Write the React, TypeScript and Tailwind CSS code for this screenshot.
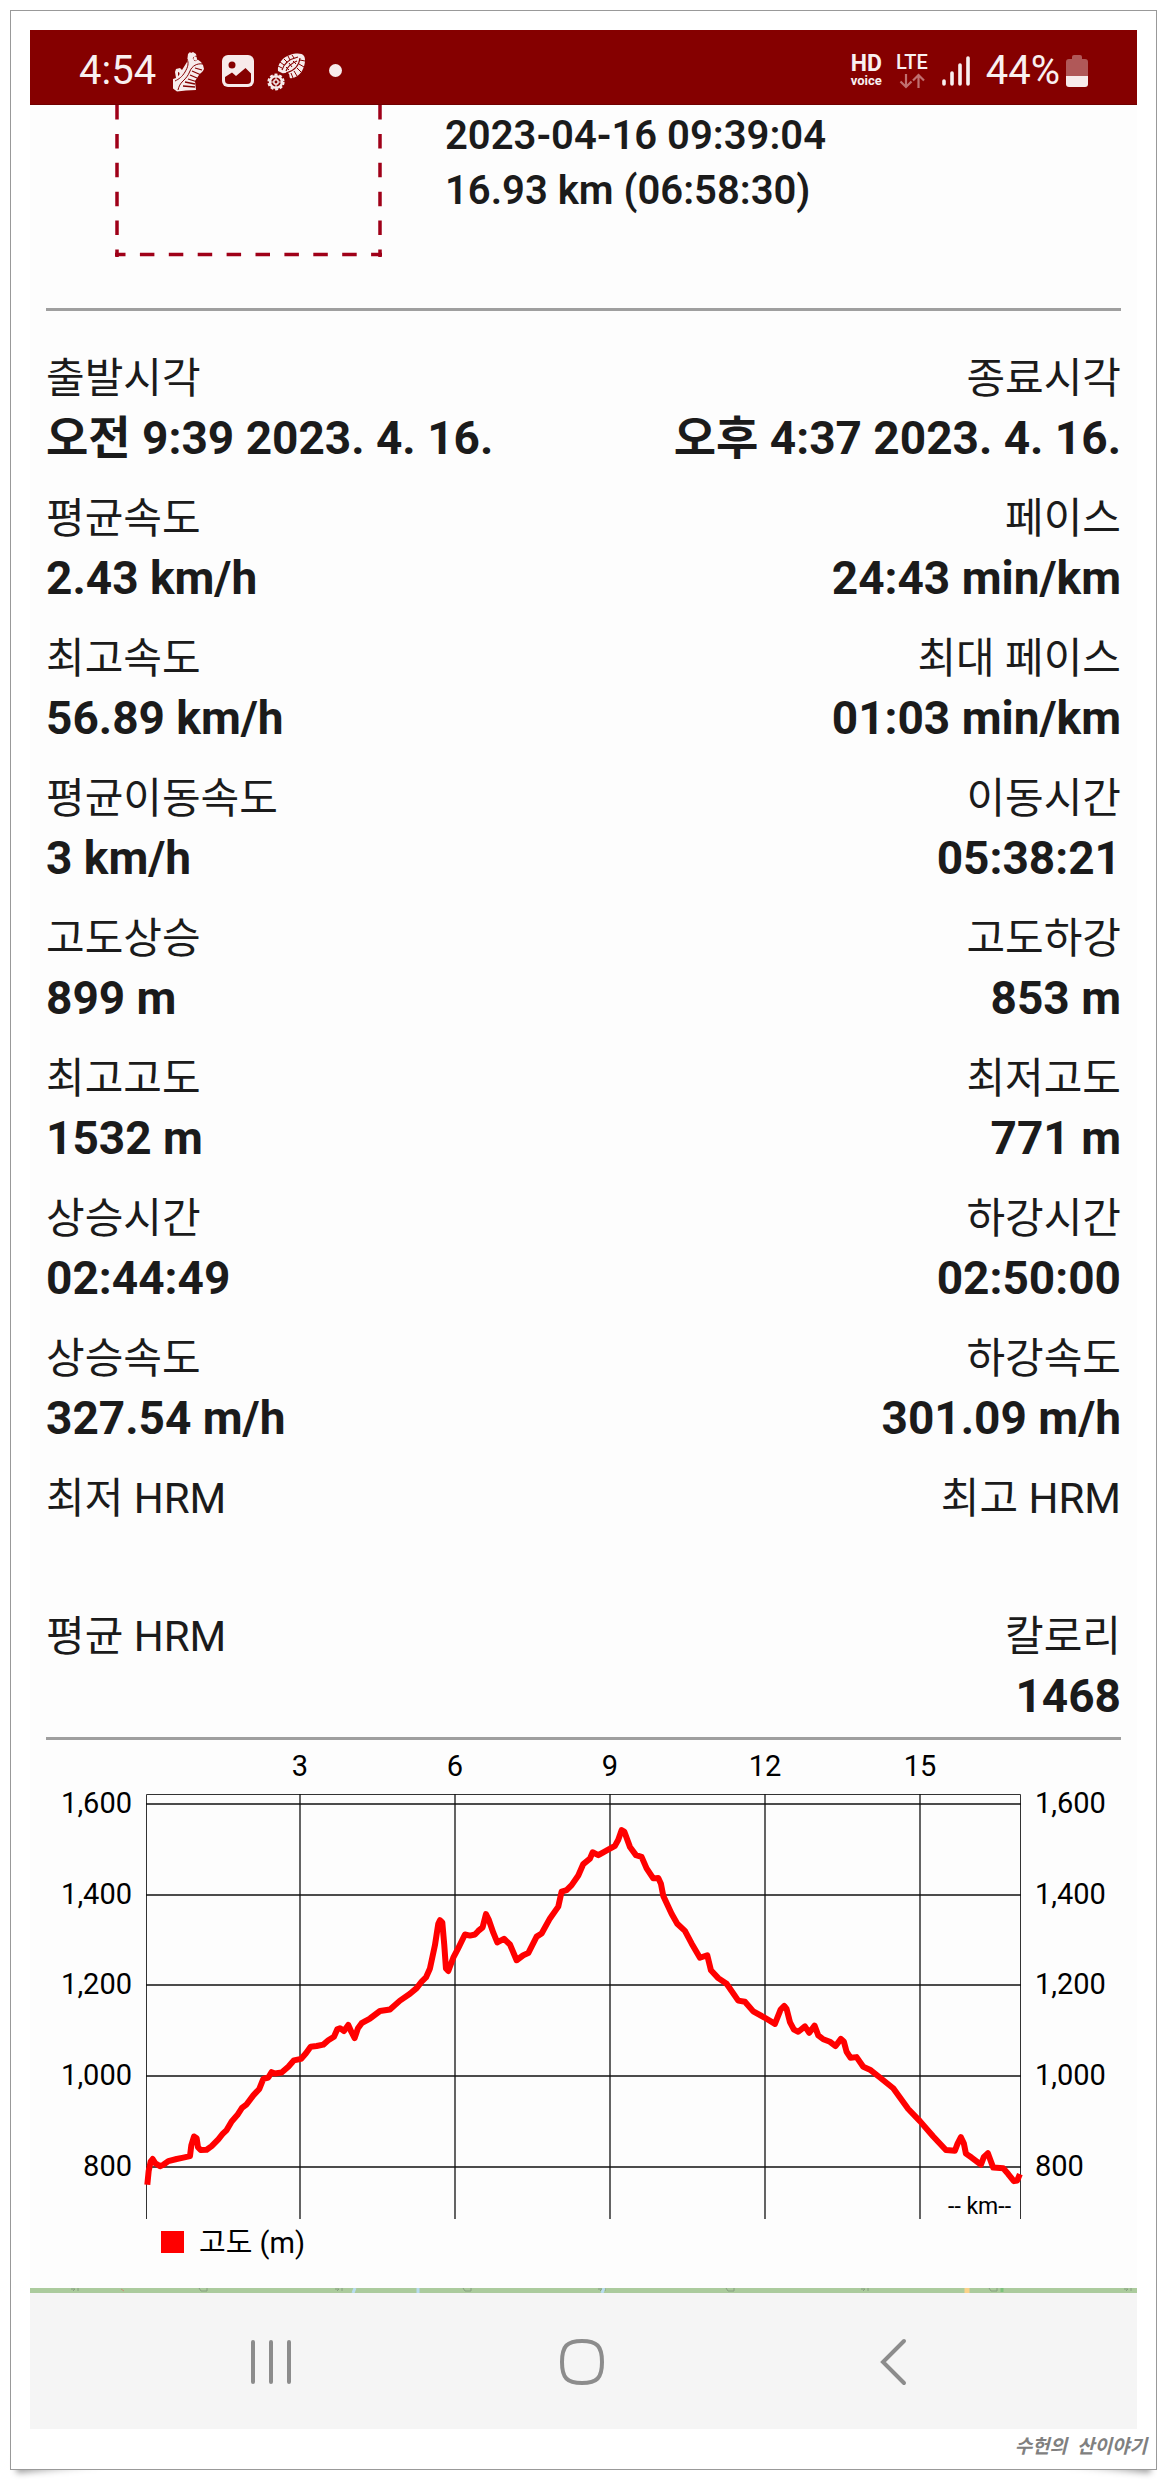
import type { ReactNode } from "react";

type Stat = { label: string; value: string };

const ROWS: [Stat, Stat][] = [
  [{ label: "출발시각", value: "오전 9:39 2023. 4. 16." }, { label: "종료시각", value: "오후 4:37 2023. 4. 16." }],
  [{ label: "평균속도", value: "2.43 km/h" }, { label: "페이스", value: "24:43 min/km" }],
  [{ label: "최고속도", value: "56.89 km/h" }, { label: "최대 페이스", value: "01:03 min/km" }],
  [{ label: "평균이동속도", value: "3 km/h" }, { label: "이동시간", value: "05:38:21" }],
  [{ label: "고도상승", value: "899 m" }, { label: "고도하강", value: "853 m" }],
  [{ label: "최고고도", value: "1532 m" }, { label: "최저고도", value: "771 m" }],
  [{ label: "상승시간", value: "02:44:49" }, { label: "하강시간", value: "02:50:00" }],
  [{ label: "상승속도", value: "327.54 m/h" }, { label: "하강속도", value: "301.09 m/h" }],
  [{ label: "최저 HRM", value: "" }, { label: "최고 HRM", value: "" }],
  [{ label: "평균 HRM", value: "" }, { label: "칼로리", value: "1468" }],
];

// Elevation trace in its own fine-grained units; the chart scales it onto the plot.
const TRACE =
  "442,1300 446,1262 452,1235 458,1228 466,1240 480,1248 490,1244 505,1234 530,1228 550,1224 570,1220 574,1190 582,1165 590,1170 594,1195 602,1203 620,1202 635,1192 655,1173 668,1158 680,1147 695,1123 712,1105 726,1085 740,1075 760,1050 778,1032 790,1004 805,1000 815,985 825,989 845,986 865,970 882,952 903,948 918,932 932,914 950,912 970,908 985,896 1002,886 1012,865 1020,862 1032,870 1045,853 1054,872 1064,890 1074,862 1085,848 1110,835 1140,814 1170,810 1200,785 1230,766 1250,750 1265,732 1278,720 1290,695 1305,630 1315,570 1320,560 1327,566 1333,630 1338,695 1345,702 1360,665 1375,638 1395,600 1410,603 1425,600 1435,590 1448,580 1458,543 1467,560 1480,595 1492,622 1512,612 1530,628 1550,672 1570,658 1585,652 1610,606 1625,597 1650,555 1675,522 1685,480 1700,476 1715,462 1735,435 1750,403 1770,388 1778,370 1795,378 1810,370 1830,360 1845,352 1855,335 1865,308 1873,312 1890,355 1908,378 1925,383 1940,415 1960,443 1975,442 1983,458 1990,492 2015,542 2032,570 2055,590 2075,625 2100,665 2122,658 2133,700 2155,722 2180,738 2215,785 2235,788 2260,815 2295,833 2325,850 2342,810 2353,800 2360,808 2370,845 2382,866 2395,872 2415,857 2428,875 2444,855 2455,882 2470,893 2490,900 2507,912 2523,892 2532,900 2540,928 2552,945 2570,943 2590,970 2610,978 2640,1000 2680,1030 2725,1088 2760,1122 2800,1165 2838,1203 2865,1205 2873,1185 2883,1167 2892,1185 2898,1213 2915,1224 2943,1244 2952,1222 2964,1212 2972,1232 2980,1252 3010,1254 3025,1270 3042,1290 3052,1288 3060,1270";

const DISTANCE_TICKS = [
  { label: "3", x: 254 },
  { label: "6", x: 409 },
  { label: "9", x: 564 },
  { label: "12", x: 719 },
  { label: "15", x: 874 },
];

const ALTITUDE_TICKS = [
  { label: "1,600", y: 64 },
  { label: "1,400", y: 155 },
  { label: "1,200", y: 245 },
  { label: "1,000", y: 336 },
  { label: "800", y: 427 },
];

function ShoeIcon() {
  return (
    <svg className="h-[42px] w-[34px]" viewBox="0 0 34 42" aria-hidden="true">
      <path
        fill="#f7ebeb"
        d="M16 4l2-2 1 1 2-1 3 2 1 5 4 3 2 3 1 4c-1 3-4 4-5 6l-4 6 1 9-10 .5-9 1-4-3V29l3-1-1-6 1-3 4-1 2 2 5-8z"
      />
      <path
        fill="none"
        stroke="#850000"
        strokeWidth="1"
        d="M31 14c-6-1-11 2-13 7s-4 7-7 10-4 5-5 9M15 9c2 4 1 8-2 13s-6 7-10 9"
      />
      <path
        fill="none"
        stroke="#850000"
        strokeWidth="1.300"
        d="M23 18l7 2M20 21l8 3.500M18 25l7 3M16 29l8 2.500M13 32l10 2M11 36l12 1"
      />
      <path fill="#850000" d="M6 22c2 0 2 3 0 4z" />
      <circle cx="23.500" cy="8.500" r="2.200" fill="none" stroke="#850000" strokeWidth="0.900" strokeDasharray="2 1" />
    </svg>
  );
}

function PictureIcon() {
  return (
    <svg className="h-[34px] w-[34px]" viewBox="0 0 34 34" aria-hidden="true">
      <rect x="1" y="1" width="32" height="32" rx="6" fill="#f7ebeb" />
      <circle cx="11" cy="11" r="3.500" fill="#850000" />
      <path fill="#850000" d="M4 23l7-4.500 4 3.500 9.500-8 5.500 5.500V26c0 2.500-1 4-4 4H8c-3 0-4-1.500-4-4z" />
    </svg>
  );
}

function BootPrintIcon() {
  return (
    <svg className="h-10 w-10" viewBox="0 0 40 40" aria-hidden="true">
      <ellipse cx="10" cy="31" rx="6" ry="5.800" fill="none" stroke="#f7ebeb" strokeWidth="2.400" />
      <ellipse cx="10" cy="31" rx="7.600" ry="7.400" fill="none" stroke="#f7ebeb" strokeWidth="2" strokeDasharray="3 1.800" />
      <circle cx="10" cy="31" r="2.200" fill="none" stroke="#f7ebeb" strokeWidth="1.500" />
      <path stroke="#f7ebeb" strokeWidth="1.200" d="M10 25v3M10 34v3M4 31h3M13 31h3" />
      <path
        fill="#f7ebeb"
        d="M12 20c-1-7 5-14 12-16 6-2 12-2 14 1s1 10-2 15-9 8-12 7c-1-2 0-4-2-5s-4 1-6 0z"
      />
      <g fill="none" stroke="#850000">
        <path strokeWidth="1.100" d="M16 19c2-7 8-11 16-13M20 22c8-2 13-7 14-15M20 20c2-5 6-8 11-10" />
        <path
          strokeWidth="1"
          d="M12 15l4 2M14 11l4 3M18 8l3 3M22 5l2 4M26 4l2 3M23 12l3 4M27 10l3 3M20 16l3 3M25 22l2 5M28 20l3 5M31 17l4 4M33 13l5 3M34 9l5 1"
        />
      </g>
    </svg>
  );
}

function DataArrowsIcon() {
  return (
    <svg className="h-4 w-[26px]" viewBox="0 0 26 16" aria-hidden="true">
      <path
        fill="none"
        stroke="#c07070"
        strokeWidth="2.200"
        d="M7 1v13M1.500 8.500L7 14l5.500-5.500M19.500 15V2M14 7.500L19.500 2 25 7.500"
      />
    </svg>
  );
}

function SignalIcon() {
  return (
    <svg className="h-8 w-7" viewBox="0 0 28 32" aria-hidden="true">
      <g stroke="#f9f0f0" strokeWidth="3.600" strokeLinecap="round">
        <path d="M2 26v3M10 18v11M18 10v19M26 3v26" />
      </g>
    </svg>
  );
}

function BatteryIcon() {
  return (
    <svg className="h-8 w-[22px]" viewBox="0 0 22 32" aria-hidden="true">
      <path fill="#b05858" d="M6 2q0-2 2-2h6q2 0 2 2v2h3q3 0 3 3v14H0V7q0-3 3-3h3z" />
      <path fill="#f7ebeb" d="M0 21h22v8q0 3-3 3H3q-3 0-3-3z" />
    </svg>
  );
}

function StatusBar() {
  return (
    <header className="flex h-[75px] items-center justify-between border-b border-[#700000] bg-[#850000] px-[49px] pt-[7px] text-[#f9f0f0]">
      <div className="flex items-center">
        <span className="mr-4 text-[40px] leading-[46px]">4:54</span>
        <ShoeIcon />
        <span className="mr-[11px] ml-[15px]">
          <PictureIcon />
        </span>
        <BootPrintIcon />
        <span className="ml-[23px] size-[13px] rounded-full bg-[#f7ebeb]" />
      </div>
      <div className="flex items-center">
        <div className="flex flex-col items-center font-bold">
          <span className="text-[23px] leading-[20px]">HD</span>
          <span className="text-[13px] leading-[14px]">voice</span>
        </div>
        <div className="ml-[14px] flex flex-col items-center gap-[2px]">
          <span className="text-[20px] leading-[18px] font-medium">LTE</span>
          <DataArrowsIcon />
        </div>
        <div className="ml-[14px]">
          <SignalIcon />
        </div>
        <span className="ml-4 text-[40px] leading-[46px]">44%</span>
        <div className="ml-[6px]">
          <BatteryIcon />
        </div>
      </div>
    </header>
  );
}

function TrackSummary() {
  return (
    <section className="flex h-[203px] gap-[62px] pl-[69px]">
      <svg className="h-[152px] w-[268px] shrink-0" viewBox="0 0 268 152" aria-hidden="true">
        <g fill="none" stroke="#9f0018" strokeWidth="3.500">
          <path strokeDasharray="14.500 14.400" d="M2 0v152" />
          <path strokeDasharray="14.500 14.400" d="M265 0v152" />
          <path strokeDasharray="14.500 14.400" strokeDashoffset="4" d="M0 149.500h267" />
        </g>
      </svg>
      <div className="pt-[3px] text-[40px] leading-[55px] font-semibold">
        <p>2023-04-16 09:39:04</p>
        <p>16.93 km (06:58:30)</p>
      </div>
    </section>
  );
}

function StatCell({ stat, right }: { stat: Stat; right?: boolean }) {
  return (
    <div className={right ? "text-right" : "text-left"}>
      <dt className="text-[42px] leading-[58px] whitespace-nowrap">{stat.label}</dt>
      <dd className="min-h-[58px] text-[46px] leading-[60px] font-bold whitespace-nowrap">{stat.value}</dd>
    </div>
  );
}

function AltitudeChart() {
  return (
    <svg
      className="block w-full text-[29px]"
      viewBox="0 0 1075 548"
      role="img"
      aria-label="고도 (m)"
      fontFamily="Roboto, 'Noto Sans CJK KR', sans-serif"
    >
      <path d="M100.500 479V54.500H974.500V479" fill="none" stroke="#333" />
      <g stroke="#111" strokeWidth="1.300">
        {DISTANCE_TICKS.map((t) => (
          <line key={t.label} x1={t.x} x2={t.x} y1="54" y2="479" />
        ))}
        {ALTITUDE_TICKS.map((t) => (
          <line key={t.label} x1="100" x2="975" y1={t.y} y2={t.y} />
        ))}
      </g>
      {DISTANCE_TICKS.map((t) => (
        <text key={t.label} x={t.x} y="36" textAnchor="middle">
          {t.label}
        </text>
      ))}
      {ALTITUDE_TICKS.map((t) => (
        <g key={t.label}>
          <text x="86" y={t.y + 9} textAnchor="end">
            {t.label}
          </text>
          <text x="989" y={t.y + 9}>
            {t.label}
          </text>
        </g>
      ))}
      <polyline
        points={TRACE}
        transform="translate(-46 -20) scale(0.3333 0.3575)"
        fill="none"
        stroke="#f00"
        strokeWidth="6"
        vectorEffect="non-scaling-stroke"
        strokeLinejoin="round"
      />
      <text x="965" y="474" textAnchor="end" fontSize="23">
        -- km--
      </text>
      <rect x="115" y="491" width="23" height="22" fill="#f00" />
      <text x="153" y="513">
        고도 (m)
      </text>
    </svg>
  );
}

function MapEdge() {
  return (
    <svg className="block h-[5px] w-full" viewBox="0 0 1107 5" preserveAspectRatio="none" aria-hidden="true">
      <rect width="1107" height="5" fill="#abcb9d" />
      <g fill="none" stroke="#86a080" strokeWidth="1">
        <path d="M41 1h4l-2 2M48 0v3M169 0l2 3h6V0M305 1h4l-2 2M312 0v3M433 0l2 3h6V0M568 1h4l-2 2M575 0v3M696 0l2 3h6V0M831 1h4l-2 2M838 0v3M959 0l2 3h6V0M1094 1h4l-2 2M1101 0v3" />
      </g>
      <path stroke="#c98f78" d="M91 1l3 2" />
      <path stroke="#b8dcf0" strokeWidth="3" d="M325 0l-2 5M388 0v5M574 0l-2 5" />
      <path stroke="#fbd28a" strokeWidth="5" d="M937 0v5" />
      <path stroke="#7cc27c" strokeWidth="3" d="M972 0v4" />
    </svg>
  );
}

function NavButton({ label, children }: { label: string; children: ReactNode }) {
  return (
    <button type="button" aria-label={label} className="flex items-center justify-center">
      <svg className="size-12" viewBox="0 0 48 48" fill="none" stroke="#8c8c8c" strokeWidth="4" strokeLinecap="round">
        {children}
      </svg>
    </button>
  );
}

export default function App() {
  return (
    <div className="bg-white p-[10px] font-[Roboto,'Noto_Sans_CJK_KR',sans-serif] text-[#1b1b1b]">
      <div className="relative">
        <div className="absolute bottom-0 left-[6px] h-4 w-[90px] rotate-[-4deg] bg-linear-to-r from-black/40 to-transparent blur-[3px]" />
        <div className="absolute right-[6px] bottom-0 h-4 w-[90px] rotate-[4deg] bg-linear-to-l from-black/40 to-transparent blur-[3px]" />
        <div className="relative border border-[#999] bg-white px-[19px] pt-[19px]">
          <main className="bg-[#fdfdfd]">
            <StatusBar />
            <div className="px-4">
              <TrackSummary />
              <hr className="border-t-3 border-[#9f9f9f]" />
              <dl className="flex flex-col gap-[22px] pt-[39px] pb-[11px]">
                {ROWS.map(([left, right]) => (
                  <div key={left.label} className="flex justify-between">
                    <StatCell stat={left} />
                    <StatCell stat={right} right />
                  </div>
                ))}
              </dl>
              <hr className="border-t-3 border-[#9f9f9f]" />
              <AltitudeChart />
            </div>
            <MapEdge />
            <nav className="grid h-[136px] grid-cols-3 bg-[#f5f5f5] pt-[2px] pr-[89px] pl-[86px]">
              <NavButton label="최근 앱">
                <path d="M6 4v40M24 4v40M42 4v40" />
              </NavButton>
              <NavButton label="홈">
                <path d="M24 3C39 3 44 8 44 24S39 45 24 45 4 40 4 24 9 3 24 3z" />
              </NavButton>
              <NavButton label="뒤로">
                <path d="M35 3L14 24l21 21" />
              </NavButton>
            </nav>
          </main>
          <footer className="-mr-[10px] flex h-10 items-start justify-end gap-[10px] pt-[6px] text-[19px] leading-6 font-bold text-[#808080] italic">
            <span>수헌의</span>
            <span>산이야기</span>
          </footer>
        </div>
      </div>
    </div>
  );
}
